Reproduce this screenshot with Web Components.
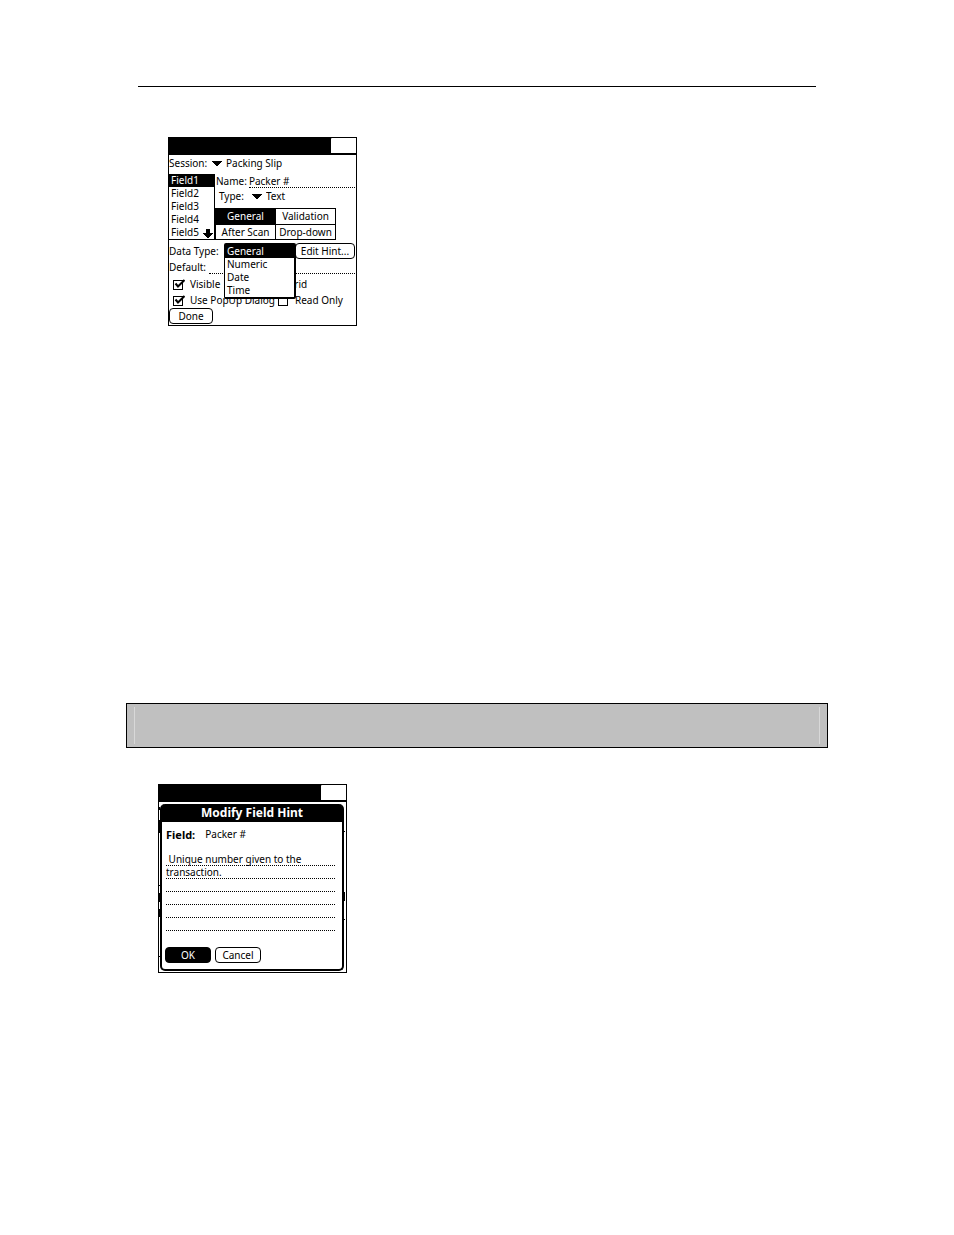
<!DOCTYPE html>
<html lang="en">
<head>
<meta charset="utf-8">
<meta name="viewport" content="width=device-width, initial-scale=1">
<title>Field hints</title>
<style>
    body {
        margin: 0;
        background: #fff;
        color: #000;
        font-family: "Noto Sans", "Open Sans", sans-serif;
        font-size: 10px;
        line-height: 13px;
    }
</style>
</head>
<body>
<manual-page>
    <palm-screen slot="setup"><field-setup></field-setup></palm-screen>
    <note-band></note-band>
    <palm-screen slot="hint"><hint-dialog></hint-dialog></palm-screen>
</manual-page>

<script>
const reset = `
    :host, * {
        box-sizing: border-box;
    }
    * {
        margin: 0;
        padding: 0;
    }
    button, input, select, textarea {
        appearance: none;
        border: 0;
        border-radius: 0;
        background: transparent;
        color: inherit;
        font: inherit;
        outline: none;
    }
`;

class ManualPage extends HTMLElement {
    constructor() {
        super();
        this.attachShadow({ mode: "open" }).innerHTML = `
            <style>
                ${reset}
                :host {
                    display: block;
                    padding: 86px 126px 262px;
                }
                hr {
                    border: 0;
                    border-top: 1px solid #000;
                    margin: 0 12px 50px;
                }
                .setup {
                    padding-left: 42px;
                    min-height: 566px;
                }
                .hint {
                    padding: 36px 0 0 32px;
                }
            </style>
            <hr>
            <div class="setup"><slot name="setup"></slot></div>
            <slot></slot>
            <div class="hint"><slot name="hint"></slot></div>
        `;
    }
}

class NoteBand extends HTMLElement {
    constructor() {
        super();
        this.attachShadow({ mode: "open" }).innerHTML = `
            <style>
                ${reset}
                :host {
                    display: block;
                    border: 1px solid #000;
                    background: #c0c0c0;
                    padding: 3px 7px;
                }
                div {
                    height: 37px;
                    border: solid #d8d8d8;
                    border-width: 0 1px;
                }
            </style>
            <div></div>
        `;
    }
}

class PalmScreen extends HTMLElement {
    constructor() {
        super();
        this.attachShadow({ mode: "open" }).innerHTML = `
            <style>
                ${reset}
                :host {
                    display: block;
                    width: 189px;
                    border: 1px solid #000;
                    background: #fff;
                }
                .bar {
                    display: flex;
                    justify-content: flex-end;
                    height: 17px;
                    padding-bottom: 2px;
                    background: #000;
                }
                .bar span {
                    width: 25px;
                    background: #fff;
                    border-top-left-radius: 1px;
                }
                .body {
                    height: 170px;
                    position: relative;
                }
            </style>
            <div class="bar"><span></span></div>
            <div class="body"><slot></slot></div>
        `;
    }
}

class PalmButton extends HTMLElement {
    constructor() {
        super();
        this.attachShadow({ mode: "open" }).innerHTML = `
            <style>
                ${reset}
                :host {
                    display: block;
                }
                button {
                    display: block;
                    width: 100%;
                    height: 16px;
                    border: 1px solid #000;
                    border-radius: 4px;
                    line-height: 14px;
                    white-space: nowrap;
                }
                :host([primary]) button {
                    background: #000;
                    color: #fff;
                }
            </style>
            <button type="button"><slot></slot></button>
        `;
    }
}

class PalmTrigger extends HTMLElement {
    connectedCallback() {
        const label = this.getAttribute("label");
        const value = this.getAttribute("value");
        this.attachShadow({ mode: "open" }).innerHTML = `
            <style>
                ${reset}
                :host, .trigger {
                    display: flex;
                    align-items: center;
                }
                .trigger {
                    gap: 4px;
                }
                label {
                    width: var(--label, 43px);
                }
            </style>
            <label for="value">${label}</label>
            <div class="trigger">
                <svg width="10" height="5" shape-rendering="crispEdges"><path d="M0 0h10v1H9v1H8v1H7v1H6v1H4V4H3V3H2V2H1V1H0z"/></svg>
                <select id="value"><option>${value}</option></select>
            </div>
        `;
    }
}

class PalmCheck extends HTMLElement {
    connectedCallback() {
        const checked = this.hasAttribute("checked");
        this.attachShadow({ mode: "open" }).innerHTML = `
            <style>
                ${reset}
                :host {
                    display: block;
                }
                label {
                    display: flex;
                    align-items: center;
                    gap: 5px;
                    white-space: nowrap;
                }
                .box {
                    display: grid;
                    width: 12px;
                    height: 11px;
                }
                input, svg {
                    grid-area: 1 / 1;
                }
                input {
                    align-self: end;
                    width: 10px;
                    height: 10px;
                    border: 1px solid #000;
                }
                svg {
                    display: none;
                }
                input:checked + svg {
                    display: block;
                }
            </style>
            <label>
                <span class="box">
                    <input type="checkbox" ${checked ? "checked" : ""}>
                    <svg width="12" height="11" fill="none" stroke="#000" stroke-width="2"><path d="M2.500 4.500l2.500 3L11.500 1"/></svg>
                </span>
                <slot></slot>
            </label>
        `;
    }
}

// One-column list of choices, the picked row is inverted
class PalmList extends HTMLElement {
    connectedCallback() {
        const items = this.getAttribute("items").split(",");
        this.attachShadow({ mode: "open" }).innerHTML = `
            <style>
                ${reset}
                :host {
                    display: block;
                    background: #fff;
                }
                button {
                    display: block;
                    width: 100%;
                    height: 13px;
                    padding-left: 2px;
                    text-align: left;
                    line-height: 13px;
                }
                [aria-selected="true"] {
                    background: #000;
                    color: #fff;
                }
            </style>
            <div role="listbox" aria-label="${this.getAttribute("label")}">
                ${items.map((item, i) => `<button type="button" role="option" aria-selected="${i === 0}">${item}</button>`).join("")}
            </div>
        `;
        const options = this.shadowRoot.querySelectorAll("button");
        options.forEach(option => option.addEventListener("click", () => {
            options.forEach(o => o.setAttribute("aria-selected", o === option));
        }));
    }
}

class FieldSetup extends HTMLElement {
    constructor() {
        super();
        this.attachShadow({ mode: "open" }).innerHTML = `
            <style>
                ${reset}
                :host {
                    display: block;
                    padding-top: 2px;
                }
                .top {
                    display: grid;
                    grid-template-columns: 46px minmax(0, 1fr);
                    margin-top: 4px;
                }
                .fields {
                    position: relative;
                    border: solid #000;
                    border-width: 0 1px 1px 0;
                    height: 66px;
                }
                .more {
                    position: absolute;
                    right: 1px;
                    bottom: 1px;
                    height: 9px;
                }
                .more svg {
                    display: block;
                }
                .row {
                    display: flex;
                    align-items: center;
                }
                .row input {
                    flex: 1;
                    min-width: 0;
                    height: 13px;
                    border-bottom: 1px dotted #000;
                }
                .name {
                    padding: 1px 0 0 1px;
                    gap: 2px;
                    margin-right: 1px;
                }
                .type {
                    --label: 33px;
                    margin: 2px 0 5px 4px;
                }
                .tabs {
                    display: grid;
                    grid-template-columns: 1fr 1fr;
                    gap: 1px;
                    width: 121px;
                    height: 32px;
                    border: 1px solid #000;
                    background: #000;
                }
                .tabs button {
                    background: #fff;
                    line-height: 14px;
                    white-space: nowrap;
                }
                .tabs .on {
                    background: #000;
                    color: #fff;
                }
                .data {
                    justify-content: space-between;
                    margin: 3px 1px 0 0;
                }
                .data palm-button {
                    width: 60px;
                }
                .menu {
                    position: absolute;
                    left: 55px;
                    top: 88px;
                    width: 72px;
                    border: 1px solid #000;
                    border-width: 2px 2px 2px 1px;
                    border-radius: 2px;
                }
                .default {
                    gap: 3px;
                    margin: 2px 1px 4px 0;
                }
                .checks {
                    padding: 0 0 3px 4px;
                }
                .checks palm-check:first-child {
                    width: 105px;
                }
                .checks .short:first-child {
                    width: 97px;
                }
                .done {
                    width: 44px;
                    margin-top: -2px;
                }
            </style>
            <palm-trigger label="Session:" value="Packing Slip"></palm-trigger>
            <div class="top">
                <div class="fields">
                    <palm-list label="Fields" items="Field1,Field2,Field3,Field4,Field5"></palm-list>
                    <button class="more" type="button" aria-label="More fields">
                        <svg width="10" height="9" shape-rendering="crispEdges"><path d="M3 0h4v4h3v1H9v1H8v1H7v1H6v1H4V8H3V7H2V6H1V5H0V4h3z"/></svg>
                    </button>
                </div>
                <div>
                    <div class="row name"><label for="name">Name:</label><input id="name" value="Packer #"></div>
                    <palm-trigger class="type" label="Type:" value="Text"></palm-trigger>
                    <div class="tabs">
                        <button type="button" class="on">General</button>
                        <button type="button">Validation</button>
                        <button type="button">After Scan</button>
                        <button type="button">Drop-down</button>
                    </div>
                </div>
            </div>
            <div class="row data"><span>Data Type:</span><palm-button>Edit Hint...</palm-button></div>
            <div class="row default"><label for="default">Default:</label><input id="default"></div>
            <div class="row checks">
                <palm-check class="short" checked>Visible</palm-check>
                <palm-check>Grid</palm-check>
            </div>
            <div class="row checks">
                <palm-check checked>Use PopUp Dialog</palm-check>
                <palm-check>Read Only</palm-check>
            </div>
            <palm-button class="done">Done</palm-button>
            <palm-list class="menu" label="Data Type" items="General,Numeric,Date,Time"></palm-list>
        `;
    }
}

class HintDialog extends HTMLElement {
    constructor() {
        super();
        this.attachShadow({ mode: "open" }).innerHTML = `
            <style>
                ${reset}
                :host {
                    display: block;
                    height: 100%;
                    padding: 2px 2px 1px 1px;
                }
                /* edges of the form that stays open under the dialog */
                .under {
                    position: absolute;
                    inset: 0;
                    width: 100%;
                    height: 100%;
                }
                .dialog {
                    position: relative;
                    height: 100%;
                    border: solid #000;
                    border-width: 0 2px 2px;
                    border-radius: 5px;
                    background: #fff;
                }
                h2 {
                    height: 18px;
                    border-radius: 3px 3px 0 0;
                    background: #000;
                    color: #fff;
                    font-size: 12px;
                    line-height: 18px;
                    text-align: center;
                }
                .content {
                    padding: 6px 6px 0 4px;
                }
                .field {
                    display: flex;
                    gap: 10px;
                    padding-bottom: 12px;
                }
                b {
                    font-size: 11px;
                }
                textarea {
                    display: block;
                    width: 100%;
                    height: 78px;
                    resize: none;
                    overflow: hidden;
                    line-height: 13px;
                    background:
                        repeating-linear-gradient(#fff 0 12px, transparent 12px 13px),
                        repeating-linear-gradient(90deg, #000 0 1px, #fff 1px 2px);
                }
                .buttons {
                    display: flex;
                    gap: 4px;
                    margin: 16px 0 0 -1px;
                }
                .buttons palm-button {
                    width: 46px;
                }
            </style>
            <svg class="under" viewBox="0 0 187 170" shape-rendering="crispEdges">
                <path d="M0 5h1v3H0zM0 18h2v13H0zM0 83h2v1H0zM0 91h2v9H0zM0 107h2v8H0zM0 154h2v1H0zM184 29h2v1h-2zM184 90h2v9h-2zM184 117h2v1h-2z"/>
            </svg>
            <section class="dialog" role="dialog" aria-labelledby="title">
                <h2 id="title">Modify Field Hint</h2>
                <div class="content">
                    <div class="field"><b>Field:</b><span>Packer #</span></div>
                    <textarea aria-label="Hint"> Unique number given to the
transaction.</textarea>
                    <div class="buttons">
                        <palm-button primary>OK</palm-button>
                        <palm-button>Cancel</palm-button>
                    </div>
                </div>
            </section>
        `;
    }
}

customElements.define("palm-button", PalmButton);
customElements.define("palm-trigger", PalmTrigger);
customElements.define("palm-check", PalmCheck);
customElements.define("palm-list", PalmList);
customElements.define("field-setup", FieldSetup);
customElements.define("hint-dialog", HintDialog);
customElements.define("palm-screen", PalmScreen);
customElements.define("note-band", NoteBand);
customElements.define("manual-page", ManualPage);
</script>
</body>
</html>
